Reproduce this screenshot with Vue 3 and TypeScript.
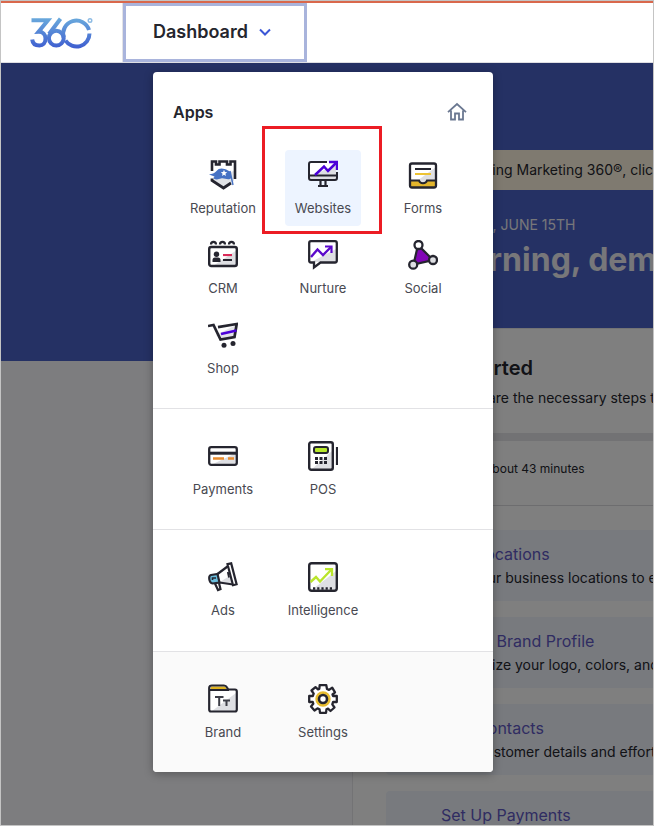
<script setup lang="ts">
interface AppItem {
  name: string
  icon: string
  active?: boolean
}

interface AppGroup {
  items: AppItem[]
  muted?: boolean
}

interface SetupTask {
  title: string
  text: string
}

const groups: AppGroup[] = [
  {
    items: [
      { name: 'Reputation', icon: 'reputation' },
      { name: 'Websites', icon: 'websites', active: true },
      { name: 'Forms', icon: 'forms' },
      { name: 'CRM', icon: 'crm' },
      { name: 'Nurture', icon: 'nurture' },
      { name: 'Social', icon: 'social' },
      { name: 'Shop', icon: 'shop' },
    ],
  },
  {
    items: [
      { name: 'Payments', icon: 'payments' },
      { name: 'POS', icon: 'pos' },
    ],
  },
  {
    items: [
      { name: 'Ads', icon: 'ads' },
      { name: 'Intelligence', icon: 'intelligence' },
    ],
  },
  {
    muted: true,
    items: [
      { name: 'Brand', icon: 'brand' },
      { name: 'Settings', icon: 'settings' },
    ],
  },
]

const tasks: SetupTask[] = [
  { title: 'Add Locations', text: 'Add your business locations to each listing' },
  { title: 'Set Up Brand Profile', text: 'Customize your logo, colors, and fonts' },
  { title: 'Add Contacts', text: 'View customer details and effortlessly' },
  { title: 'Set Up Payments', text: 'Start accepting payments' },
]
</script>

<template>
  <div class="frame">
    <header class="topbar">
      <a class="logo" href="#" aria-label="360 home">
        <svg viewBox="0 0 64 32" width="64" height="32" fill="none">
          <defs>
            <linearGradient id="logo-blue" gradientUnits="userSpaceOnUse" x1="0" y1="1" x2="0" y2="31">
              <stop offset="0" stop-color="#69a9dc" />
              <stop offset="1" stop-color="#3f5fd0" />
            </linearGradient>
          </defs>
          <g stroke="url(#logo-blue)" stroke-width="4">
            <path d="M2.500 3.200H19L9.500 14.800C14 14.600 16.500 17.500 16.500 21.500C16.500 26 14 28.500 10.500 28.500C6.500 28.500 3.600 26.500 3.200 22.500" />
            <path d="M31.500 1.800L20 17" />
            <circle cx="27.300" cy="21.200" r="7.400" />
            <path d="M34.700 20.500A13 13 0 1 1 60 13" />
            <path d="M60.500 16.500A13 13 0 0 1 36.500 23.500" />
          </g>
          <circle cx="61" cy="3.500" r="1.800" stroke="#8dbbe4" stroke-width="1.400" />
        </svg>
      </a>
      <button class="switcher" type="button" aria-expanded="true">
        <span>Dashboard</span>
        <svg viewBox="0 0 14 10" width="14" height="10" fill="none">
          <path d="M2 2.500L7 7.500L12 2.500" stroke="#3c57d6" stroke-width="2" />
        </svg>
      </button>
    </header>

    <div class="stage">
      <main class="page">
        <section class="hero">
          <p class="notice">Thank you for using Marketing 360®, click here</p>
          <p class="date">WEDNESDAY, JUNE 15TH</p>
          <h1>Good morning, demo</h1>
        </section>
        <section class="started">
          <div class="intro">
            <h2>Get Started</h2>
            <p>These are the necessary steps to</p>
          </div>
          <div class="progress"></div>
          <p class="time">Takes about 43 minutes</p>
          <ul class="tasks">
            <li v-for="task in tasks" :key="task.title">
              <a href="#">{{ task.title }}</a>
              <p>{{ task.text }}</p>
            </li>
          </ul>
        </section>
      </main>
      <div class="shade"></div>

      <nav class="panel" aria-label="Apps">
        <div class="panel-head">
          <h2>Apps</h2>
          <a href="#" aria-label="Home">
            <svg viewBox="0 0 20 20" width="20" height="20" fill="none">
              <path d="M1 10.200L10 2L19 10.200M4 8.500V17.500H8V11.500H12V17.500H16V8.500" stroke="#6b7891" stroke-width="1.800" />
            </svg>
          </a>
        </div>
        <div v-for="(group, index) in groups" :key="index" class="group" :class="{ muted: group.muted, first: index === 0 }">
          <a v-for="item in group.items" :key="item.name" href="#" class="tile" :class="{ active: item.active }">
            <svg class="icon" viewBox="0 0 30 30" width="30" height="30" fill="none">
              <template v-if="item.icon === 'reputation'">
                <path d="M5 17L26 11V21L15 28L5 22Z" fill="#e1e3e7" />
                <path d="M4 11V1.500H8V4.500H11.500V1.500H19V4.500H22.500V1.500H27V19" stroke="#25252f" stroke-width="2.600" />
                <path d="M4 18.500V20.500L15.500 28L23 23" stroke="#25252f" stroke-width="2.800" />
                <path d="M1 14.500C4 14 6.500 13.500 8.500 11C11 7.800 15 7.800 20 10.500L22 11.500L23.500 18C20 21 16.500 17.500 13 18.500C10.500 19.300 8.500 20 5.500 18.500L6.500 16.500Z" fill="#4672c4" />
                <path d="M22 11L25 25" stroke="#4672c4" stroke-width="1.400" />
                <path d="M16 9.700L16.900 12L19.200 12.200L17.400 13.700L18 16L16 14.800L14 16L14.600 13.700L12.800 12.200L15.100 12Z" fill="#fff" />
              </template>
              <template v-else-if="item.icon === 'websites'">
                <path d="M1 2H28V20H1Z" fill="#fff" />
                <path d="M2 16L28 5V20H2Z" fill="#dedfe3" />
                <path d="M19 2H3Q1 2 1 4V18Q1 20 3 20H27Q29 20 29 18V12" stroke="#25252f" stroke-width="2" />
                <path d="M1 15.500H29" stroke="#25252f" stroke-width="2" />
                <path d="M7 15L16 6.500L20 11L28 3" stroke="#4b00d8" stroke-width="2.500" />
                <path d="M21 2H29V10" stroke="#4b00d8" stroke-width="2.400" />
                <path d="M12.500 20V25M17.500 20V25M10 26H20" stroke="#25252f" stroke-width="2.200" />
              </template>
              <template v-else-if="item.icon === 'forms'">
                <rect x="2" y="3" width="26" height="24" rx="2" fill="#fff" />
                <path d="M9 21L28 7V22H15Z" fill="#dedfe3" />
                <path d="M2 21H11C12 24 18 24 19 21H28V27H2Z" fill="#e3b52c" />
                <rect x="2" y="3.500" width="26" height="24" rx="2" stroke="#25252f" stroke-width="2.300" />
                <path d="M2 20.500H11C12 24 18 24 19 20.500H28" stroke="#25252f" stroke-width="2" />
                <path d="M7 9H23" stroke="#25252f" stroke-width="2" />
                <path d="M7 14H23" stroke="#edc334" stroke-width="2" />
              </template>
              <template v-else-if="item.icon === 'crm'">
                <rect x="1" y="7" width="28" height="19" rx="2" fill="#fff" />
                <path d="M5 26L29 10V26Z" fill="#dedfe3" />
                <rect x="1.200" y="7" width="27.600" height="19" rx="2" stroke="#25252f" stroke-width="2.400" />
                <path d="M3 4.500C3 1 8 1 8 4.500M12 4.500C12 1 17 1 17 4.500M21 4.500C21 1 26 1 26 4.500" stroke="#25252f" stroke-width="2.200" />
                <circle cx="8.500" cy="14.200" r="2.700" fill="#25252f" />
                <path d="M4.500 22V20Q4.500 17.500 7 17.500H10Q12.500 17.500 12.500 20V22Z" fill="#25252f" />
                <path d="M15 15H24" stroke="#d92a58" stroke-width="2.200" />
                <path d="M15 20H24" stroke="#25252f" stroke-width="2" />
              </template>
              <template v-else-if="item.icon === 'nurture'">
                <path d="M1 2H29V22H12L6 28V22H1Z" fill="#fff" />
                <path d="M5 21L28 9V22H5Z" fill="#dedfe3" />
                <path d="M3 1.200H27Q28.800 1.200 28.800 3V20.500Q28.800 22.500 27 22.500H12.500L6 27.500V22.500H3Q1.200 22.500 1.200 20.500V3Q1.200 1.200 3 1.200Z" stroke="#25252f" stroke-width="2.300" />
                <path d="M3 17L9.500 9.500L15 15L23 7" stroke="#5b09cb" stroke-width="2.400" />
                <path d="M17 6.500H23.500V13" stroke="#5b09cb" stroke-width="2.200" />
              </template>
              <template v-else-if="item.icon === 'social'">
                <path d="M10 5L5.500 24.500L25 20Z" fill="#8205b7" stroke="#25252f" stroke-width="2.200" />
                <circle cx="10.500" cy="5" r="4" fill="#fff" stroke="#25252f" stroke-width="2.300" />
                <circle cx="5.200" cy="24.700" r="4" fill="#dedfe3" stroke="#25252f" stroke-width="2.300" />
                <circle cx="25" cy="20" r="4" fill="#dedfe3" stroke="#25252f" stroke-width="2.300" />
              </template>
              <template v-else-if="item.icon === 'shop'">
                <path d="M8 15L28 5L26 17L12 19Z" fill="#e3e3e8" />
                <path d="M0 6L5.500 5L12.500 19.500L26.500 17L28.700 4L10 7.200" stroke="#25252f" stroke-width="2.700" />
                <path d="M13 14L28.500 10.500" stroke="#4b00d8" stroke-width="2.700" />
                <circle cx="16" cy="25.300" r="2.500" fill="#25252f" />
                <circle cx="25" cy="23.500" r="2.500" fill="#25252f" />
              </template>
              <template v-else-if="item.icon === 'payments'">
                <rect x="1" y="6" width="28" height="18" rx="2" fill="#fff" />
                <path d="M5 23L28 12V24H5Z" fill="#dedfe3" />
                <rect x="1.200" y="6.200" width="27.600" height="17.600" rx="2" stroke="#25252f" stroke-width="2.300" />
                <path d="M1 12.200H29" stroke="#25252f" stroke-width="3" />
                <path d="M5 17.500H16M20 17.500H26" stroke="#e88b2e" stroke-width="2.600" />
              </template>
              <template v-else-if="item.icon === 'pos'">
                <rect x="1" y="1" width="23" height="28" rx="2" fill="#fff" />
                <path d="M4 28L24 10V28Z" fill="#dedfe3" />
                <rect x="1.200" y="1.200" width="23.600" height="27.600" rx="2" stroke="#25252f" stroke-width="2.400" />
                <rect x="6" y="6" width="14" height="6" rx="2" fill="#b7e82b" stroke="#25252f" stroke-width="2" />
                <path d="M7 17.500H19M7 21.500H19" stroke="#25252f" stroke-width="3" stroke-dasharray="3 1.500" />
                <path d="M29 6V24" stroke="#25252f" stroke-width="2.200" />
              </template>
              <template v-else-if="item.icon === 'ads'">
                <path d="M9.500 12L20 4L24.500 22L11.500 20.500Z" fill="#fff" />
                <path d="M12 20L23 13L25 22L11.500 20.500Z" fill="#dedfe3" />
                <path d="M7 21.500L10 28L12.500 27L11 21" fill="#fff" stroke="#25252f" stroke-width="2.200" />
                <path d="M3 13L9.500 12L11.500 20.500L4.500 21.500Q1.200 20.500 1.200 16Q1.200 13.500 3 13Z" fill="#69bddd" stroke="#25252f" stroke-width="2.200" />
                <path d="M4.500 18V16H8" stroke="#25252f" stroke-width="1.600" />
                <path d="M9.500 12L19.500 4.500M11.500 20.500L25 22.500" stroke="#25252f" stroke-width="2.200" />
                <path d="M19.500 2.200L23.200 1.400L28.600 22.200L25 23.200Z" fill="#fff" stroke="#25252f" stroke-width="2.200" />
                <path d="M19.800 10L21 15.500" stroke="#25252f" stroke-width="1.800" />
              </template>
              <template v-else-if="item.icon === 'intelligence'">
                <rect x="1.200" y="1.200" width="27.600" height="27.600" rx="2.500" fill="#fff" />
                <path d="M5 27L28 9V27Z" fill="#dedfe3" />
                <rect x="1.200" y="1.200" width="27.600" height="27.600" rx="2.500" stroke="#25252f" stroke-width="2.400" />
                <path d="M2.500 20L8 15L12 19.500L23 8" stroke="#b9e52b" stroke-width="2.400" />
                <path d="M17 7.200H24V14" stroke="#b9e52b" stroke-width="2.300" />
                <path d="M5 26.500H26" stroke="#25252f" stroke-width="2.600" stroke-dasharray="2.200 2" />
              </template>
              <template v-else-if="item.icon === 'brand'">
                <path d="M1 6V3L3.500 1.500H17L20 5.500H27Q29 5.500 29 7V26H1Z" fill="#fff" />
                <path d="M3 2.500H17L19 5.500H2.500Z" fill="#dfb31f" />
                <path d="M4 27L28 9V27Z" fill="#dedfe3" />
                <path d="M1.200 25.500V4Q1.200 1.500 4 1.500H16Q18 1.500 19 3.500L20.200 5.500H27Q28.800 5.500 28.800 7.500V25.500Q28.800 27.500 27 27.500H3Q1.200 27.500 1.200 25.500ZM1.200 6H21" stroke="#25252f" stroke-width="2.200" />
                <path d="M7 13H15.500M11.200 13V22M15 16.500H22M18.500 16.500V22" stroke="#3d3e47" stroke-width="2" />
              </template>
              <template v-else>
                <path d="M11.700 1.200H18.300L19 5L21 5.900L24.200 3.700L27 8.400L24.500 10.500L25.100 12H28.800V18H25.100L24.300 20.300L26.500 23.500L22.500 27L20 24.600L18.500 25.200L18 28.800H12L11.500 25.200L9.500 24.400L6.500 26.500L3 22.500L5.300 19.800L4.800 18H1.200V12H4.800L5.700 9.700L3.500 6.500L7.500 3.200L10 5.400L11.300 5Z" fill="#fff" stroke="#25252f" stroke-width="2.300" stroke-linejoin="round" />
                <circle cx="15" cy="15" r="6.200" stroke="#e8bd30" stroke-width="3" />
                <circle cx="15" cy="15" r="4" stroke="#25252f" stroke-width="2.600" />
              </template>
            </svg>
            <span>{{ item.name }}</span>
          </a>
        </div>
        <div class="highlight"></div>
      </nav>
    </div>
  </div>
</template>

<style>
body {
  margin: 0;
}
</style>

<style scoped>
.frame {
  box-sizing: border-box;
  display: flex;
  flex-direction: column;
  height: 100vh;
  overflow: hidden;
  border: 1px solid #c4c4c4;
  background: #fff;
  color: #25262e;
  font-family: Inter, "Liberation Sans", sans-serif;
}

h1,
h2,
p,
ul {
  margin: 0;
  padding: 0;
}

a {
  color: inherit;
  text-decoration: none;
}

.topbar {
  display: flex;
  flex: none;
  height: 59px;
  border-top: 2px solid #d9684c;
  border-bottom: 1px solid #dedee2;
}

.logo {
  display: flex;
  flex: none;
  align-items: flex-start;
  box-sizing: border-box;
  width: 122px;
  padding: 14px 28px;
  border-right: 1px solid #e3e3e6;
}

.switcher {
  display: flex;
  align-items: center;
  gap: 10px;
  padding: 0 32px 2px 27px;
  border: 3px solid #a9b4dc;
  background: #fff;
  color: #25262e;
  font: 600 18px/24px Inter, "Liberation Sans", sans-serif;
}

.stage {
  position: relative;
  flex: 1;
  min-height: 0;
}

.page {
  height: 100%;
  overflow: hidden;
  background: #fbfbfe;
}

.hero {
  box-sizing: border-box;
  height: 298px;
  padding: 87px 0 0 340px;
  background: #4a62c8;
  color: #eeeef4;
  white-space: nowrap;
}

.notice {
  padding: 0 0 0 40px;
  background: #fff5e0;
  color: #25262e;
  font-size: 14px;
  line-height: 40px;
}

.date {
  padding: 24px 0 0 64px;
  font-size: 14px;
  line-height: 22px;
}

h1 {
  padding: 4px 0 0 8px;
  font-size: 32px;
  font-weight: 700;
  line-height: 40px;
}

.started {
  margin: -33px 0 0 351px;
  border: 1px solid #e6e6ea;
  border-right: 0;
  background: #fff;
  white-space: nowrap;
}

.intro {
  height: 104px;
  box-sizing: border-box;
  padding: 24px 0 0 70px;
}

.intro h2 {
  font-size: 20px;
  font-weight: 600;
  line-height: 30px;
}

.intro p {
  padding: 4px 0 0 20px;
  font-size: 14px;
  line-height: 22px;
}

.progress {
  height: 8px;
  background: #e4e4e8;
}

.time {
  padding: 16px 0 25px 96px;
  border-bottom: 1px solid #dadade;
  font-size: 12px;
  line-height: 23px;
}

.tasks {
  display: grid;
  gap: 16px;
  padding: 24px 0 0 33px;
  list-style: none;
}

.tasks li {
  box-sizing: border-box;
  height: 71px;
  padding: 13px 0 0 55px;
  border-radius: 4px 0 0 4px;
  background: #f0f4fd;
}

.tasks a {
  display: block;
  color: #6059c4;
  font-size: 16px;
  line-height: 22px;
}

.tasks p {
  padding-top: 2px;
  font-size: 14px;
  line-height: 22px;
}

.shade {
  position: absolute;
  inset: 0;
  background: rgba(0, 0, 0, 0.5);
}

.panel {
  position: absolute;
  top: 9px;
  left: 152px;
  width: 340px;
  overflow: hidden;
  border-radius: 4px;
  background: #fff;
  box-shadow: 0 2px 10px rgba(0, 0, 0, 0.3);
}

.panel-head {
  display: flex;
  align-items: center;
  justify-content: space-between;
  padding: 28px 26px 26px 20px;
}

.panel-head h2 {
  font-size: 16px;
  font-weight: 600;
  line-height: 24px;
}

.panel-head a {
  display: flex;
}

.group {
  display: grid;
  grid-template-columns: repeat(3, 76px);
  gap: 4px 24px;
  padding: 22px 32px;
  border-top: 1px solid #e2e2e5;
}

.group.first {
  padding-top: 0;
  border-top: 0;
}

.group.muted {
  margin-top: 1px;
  background: #fafafa;
}

.tile {
  display: flex;
  flex-direction: column;
  align-items: center;
  box-sizing: border-box;
  height: 76px;
  padding-top: 10px;
  border-radius: 4px;
  color: #484951;
  font-size: 13px;
  line-height: 20px;
}

.tile.active {
  background: #edf4ff;
}

.tile .icon {
  flex: none;
  margin-bottom: 8px;
}

.highlight {
  position: absolute;
  top: 54px;
  left: 109px;
  box-sizing: border-box;
  width: 120px;
  height: 108px;
  border: 3px solid #ec1c24;
}
</style>
